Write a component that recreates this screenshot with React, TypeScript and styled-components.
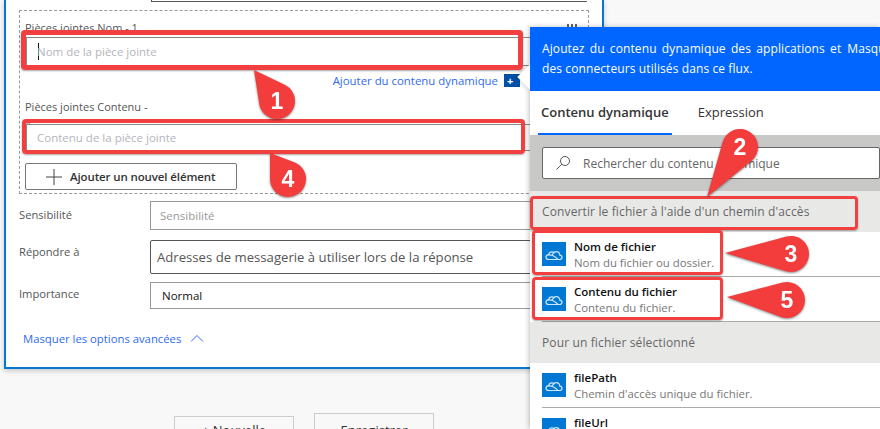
import styled, { createGlobalStyle } from 'styled-components';

const GlobalStyle = createGlobalStyle`
  html, body {
    margin: 0;
    padding: 0;
    background: #f8f8f8;
  }
  * {
    box-sizing: border-box;
  }
`;

const Page = styled.div`
  position: relative;
  width: 880px;
  height: 429px;
  overflow: hidden;
  background: #f8f8f8;
  font-family: 'Open Sans', 'Noto Sans', sans-serif;
  font-size: 11.5px;
  color: #555;
`;

const Card = styled.div`
  margin-left: 4px;
  width: 600px;
  height: 369px;
  background: #fff;
  border: 2px solid #0078d4;
  border-top: none;
  box-shadow: 0 2px 5px rgba(0, 0, 0, 0.2);
`;

const TopField = styled.div`
  margin-left: 145px;
  width: 436px;
  height: 2px;
  border-left: 1px solid #555;
  border-bottom: 1px solid #555;
`;

const Repeater = styled.div`
  margin: 8px 0 0 13px;
  width: 570px;
  height: 184px;
  padding: 9px 0 0 5px;
  border: 1px dashed #999;
`;

const LabelRow = styled.div`
  display: flex;
  justify-content: space-between;
  padding-right: 10px;
`;

const MoreDots = styled.svg`
  margin-top: 4px;
`;

const FieldLabel = styled.div<{ $height: number }>`
  width: 126px;
  height: ${(p) => p.$height}px;
  line-height: 16px;
  color: #555;
  font-size: 11px;
`;

const FieldInput = styled.div<{ $height: number }>`
  display: flex;
  align-items: center;
  width: 520px;
  height: ${(p) => p.$height}px;
  margin-left: 1px;
  padding-left: 10px;
  background: #fff;
  border: 1px solid #888;
  color: #b4b4bc;
`;

const Caret = styled.span`
  width: 1px;
  height: 17px;
  margin: 0 -2px 0 1px;
  background: #111;
`;

const LinkRow = styled.div`
  display: flex;
  justify-content: flex-end;
  align-items: center;
  gap: 6px;
  width: 495px;
  height: 33px;
  padding-bottom: 5px;
`;

const BlueLink = styled.a`
  color: #2f6bf0;
  font-size: 11.4px;
`;

const PlusBadge = styled.span`
  display: flex;
  align-items: center;
  width: 16px;
  height: 13px;
  padding-left: 3px;
  background: #0050a8;
  color: #fff;
  font-size: 11px;
  font-weight: 700;
  line-height: 13px;
`;

const AddButton = styled.button`
  display: flex;
  align-items: center;
  gap: 8px;
  width: 212px;
  height: 27px;
  margin-top: 12px;
  padding: 0 0 0 20px;
  background: #fff;
  border: 1px solid #777;
  border-radius: 2px;
  font-family: inherit;
  font-size: 11.5px;
  font-weight: 600;
  letter-spacing: -0.12px;
  color: #333;
`;

const FormRow = styled.div<{ $height: number; $top: number }>`
  display: grid;
  grid-template-columns: 131px 1fr;
  height: ${(p) => p.$height}px;
  margin: ${(p) => p.$top}px 0 0 13px;
  width: 570px;
`;

const RowLabel = styled.div<{ $drop: number }>`
  padding-top: ${(p) => p.$drop}px;
  line-height: 16px;
  font-size: 11.2px;
  color: #555;
`;

const RowInput = styled.div<{ $dark?: boolean; $color: string; $pad: number; $size: number }>`
  display: flex;
  align-items: center;
  padding-left: ${(p) => p.$pad}px;
  background: #fff;
  border: 1px solid ${(p) => (p.$dark ? '#555' : '#999')};
  border-radius: ${(p) => (p.$dark ? 2 : 0)}px;
  color: ${(p) => p.$color};
  font-size: ${(p) => p.$size}px;
`;

const AdvancedLink = styled.div`
  display: flex;
  align-items: center;
  gap: 9px;
  margin: 21px 0 0 17px;
  height: 16px;
  color: #2f6bf0;
  font-size: 11.3px;
`;

const BottomActions = styled.div`
  display: flex;
  align-items: flex-start;
  gap: 20px;
  margin: 44px 0 0 174px;
`;

const GhostButton = styled.div<{ $drop: number }>`
  width: 120px;
  height: 32px;
  margin-top: ${(p) => p.$drop}px;
  padding-top: ${(p) => 7 - p.$drop}px;
  border: 1px solid #ccc;
  text-align: center;
  font-size: 13px;
  color: #333;
`;

const Panel = styled.div`
  position: absolute;
  left: 530px;
  top: 27px;
  width: 350px;
  height: 402px;
  background: #fff;
  box-shadow: -1px 0 5px rgba(0, 0, 0, 0.25);

  &::before {
    content: '';
    position: absolute;
    left: -9px;
    top: 41px;
    width: 18px;
    height: 18px;
    background: #fff;
    transform: rotate(45deg);
    box-shadow: -2px 2px 4px rgba(0, 0, 0, 0.12);
  }
`;

const PanelHeader = styled.div`
  position: relative;
  height: 64px;
  padding: 12px 0 0 12px;
  background: #0066ff;
  color: #fff;
  font-size: 12px;
  line-height: 20px;
  letter-spacing: 0.1px;
  white-space: nowrap;
  overflow: hidden;
`;

const HeaderLine = styled.div`
  display: flex;
  gap: 6px;
  word-spacing: 2px;
`;

const Tabs = styled.div`
  display: flex;
  height: 44px;
  padding-left: 8px;
  gap: 23px;
  background: #fff;
`;

const Tab = styled.div<{ $active?: boolean }>`
  display: flex;
  align-items: center;
  height: 44px;
  padding: 0 3px;
  border-bottom: 2px solid ${(p) => (p.$active ? '#0066ff' : 'transparent')};
  color: #333;
  font-size: 13px;
  font-weight: ${(p) => (p.$active ? 600 : 400)};
`;

const SearchArea = styled.div`
  height: 56px;
  padding: 12px 0 0 12px;
  background: #c8c9c7;
`;

const SearchBox = styled.div`
  display: flex;
  align-items: center;
  gap: 12px;
  height: 32px;
  padding-left: 12px;
  background: #fff;
  border: 1px solid #666;
  border-radius: 2px;
  color: #666;
  font-size: 12px;
`;

const SectionHeader = styled.div`
  display: flex;
  align-items: center;
  height: 41px;
  padding-left: 12px;
  background: #e8e9e7;
  color: #666;
  font-size: 12px;
  letter-spacing: 0.13px;
`;

const Item = styled.div`
  display: flex;
  gap: 8px;
  height: 45px;
  margin-left: 12px;
  padding-top: 10px;
  border-bottom: 1px solid #aaa;
`;

const ItemIcon = styled.div`
  flex: none;
  width: 24px;
  height: 24px;
  background: #0078d4;
`;

const ItemText = styled.div`
  margin-top: -3px;
`;

const ItemTitle = styled.div`
  color: #111;
  font-size: 11.5px;
  font-weight: 600;
  line-height: 16px;
`;

const ItemDesc = styled.div`
  color: #777;
  font-size: 11.4px;
  line-height: 16px;
`;

const Highlight = styled.div<{ $x: number; $y: number; $w: number; $h: number; $thick: number }>`
  position: absolute;
  left: ${(p) => p.$x}px;
  top: ${(p) => p.$y}px;
  width: ${(p) => p.$w}px;
  height: ${(p) => p.$h}px;
  border: ${(p) => p.$thick}px solid #f23f3f;
  border-radius: 4px;
  box-shadow: 0 1px 2px rgba(0, 0, 0, 0.35);
`;

const CalloutLayer = styled.svg`
  position: absolute;
  left: 0;
  top: 0;
  filter: drop-shadow(0 1px 1px rgba(0, 0, 0, 0.45));
`;

const CalloutNumber = styled.text`
  fill: #fff;
  font-family: 'Liberation Sans', Arial, sans-serif;
  font-size: 23px;
  font-weight: 700;
  text-anchor: middle;
`;

const highlights = [
  { x: 21, y: 30, w: 502, h: 40, thick: 5 },
  { x: 22, y: 119, w: 503, h: 35, thick: 4 },
  { x: 530, y: 196, w: 328, h: 34, thick: 3 },
  { x: 532, y: 230, w: 191, h: 45, thick: 3 },
  { x: 532, y: 277, w: 191, h: 43, thick: 3 },
];

const callouts = [
  { n: 1, tx: 254, ty: 70, cx: 277, cy: 101 },
  { n: 4, tx: 270, ty: 153, cx: 288, cy: 179 },
  { n: 2, tx: 707, ty: 197, cx: 740, cy: 147 },
  { n: 3, tx: 725, ty: 253, cx: 791, cy: 254 },
  { n: 5, tx: 727, ty: 297, cx: 787, cy: 300 },
];

// teardrop: tangent lines from the tip round the circle
function dropPath(tx: number, ty: number, cx: number, cy: number, r: number) {
  const angle = Math.atan2(ty - cy, tx - cx);
  const spread = Math.acos(r / Math.hypot(tx - cx, ty - cy));
  const ax = cx + r * Math.cos(angle + spread);
  const ay = cy + r * Math.sin(angle + spread);
  const bx = cx + r * Math.cos(angle - spread);
  const by = cy + r * Math.sin(angle - spread);
  return `M${tx} ${ty}L${ax} ${ay}A${r} ${r} 0 1 1 ${bx} ${by}Z`;
}

function CloudIcon() {
  return (
    <ItemIcon>
      <svg width="24" height="24" viewBox="0 0 24 24" fill="none" stroke="#cfe6fa" strokeWidth="1.2">
        <path d="M7 17.500h10.500c1.600 0 2.500-1 2.500-2.200 0-1.200-.9-2.100-2.200-2.200-.2-2-1.600-3.400-3.600-3.400-.9 0-1.700.3-2.300.8-.6-.5-1.300-.7-2-.7-1.700 0-3 1.200-3.200 2.900C5 12.900 4 13.900 4 15.200c0 1.300 1.200 2.300 3 2.300z" />
        <path d="M6 13c3-.6 6 .4 10 4.400M12.400 10.500c-1 .6-1.800 1.400-2.200 2.400" />
      </svg>
    </ItemIcon>
  );
}

function SearchIcon() {
  return (
    <svg width="16" height="16" viewBox="0 0 16 16" fill="none" stroke="#555" strokeWidth="1">
      <circle cx="10" cy="6" r="4.500" />
      <path d="M6.800 9.200 1.500 14.500" />
    </svg>
  );
}

function FileItem({ title, desc }: { title: string; desc: string }) {
  return (
    <Item>
      <CloudIcon />
      <ItemText>
        <ItemTitle>{title}</ItemTitle>
        <ItemDesc>{desc}</ItemDesc>
      </ItemText>
    </Item>
  );
}

function App() {
  return (
    <Page>
      <GlobalStyle />
      <Card>
        <TopField />
        <Repeater>
          <LabelRow>
            <FieldLabel $height={17}>Pièces jointes Nom - 1</FieldLabel>
            <MoreDots width="11" height="3" viewBox="0 0 11 3" fill="#666">
              <rect x="0" y="0" width="2" height="3" />
              <rect x="4" y="0" width="2" height="3" />
              <rect x="8" y="0" width="2" height="3" />
            </MoreDots>
          </LabelRow>
          <FieldInput $height={29}>
            <Caret />
            Nom de la pièce jointe
          </FieldInput>
          <LinkRow>
            <BlueLink>Ajouter du contenu dynamique</BlueLink>
            <PlusBadge>+</PlusBadge>
          </LinkRow>
          <FieldLabel $height={25}>Pièces jointes Contenu - *</FieldLabel>
          <FieldInput $height={27}>Contenu de la pièce jointe</FieldInput>
          <AddButton>
            <svg width="16" height="16" viewBox="0 0 16 16" stroke="#444" strokeWidth="1">
              <path d="M0 8h16M8 0v16" />
            </svg>
            Ajouter un nouvel élément
          </AddButton>
        </Repeater>
        <FormRow $height={29} $top={7}>
          <RowLabel $drop={6}>Sensibilité</RowLabel>
          <RowInput $color="#999" $pad={9} $size={11.5}>Sensibilité</RowInput>
        </FormRow>
        <FormRow $height={34} $top={10}>
          <RowLabel $drop={4}>Répondre à</RowLabel>
          <RowInput $dark $color="#555" $pad={6} $size={13.15}>
            Adresses de messagerie à utiliser lors de la réponse
          </RowInput>
        </FormRow>
        <FormRow $height={27} $top={8}>
          <RowLabel $drop={4}>Importance</RowLabel>
          <RowInput $color="#111" $pad={11} $size={11.5}>Normal</RowInput>
        </FormRow>
        <AdvancedLink>
          Masquer les options avancées
          <svg width="14" height="8" viewBox="0 0 14 8" fill="none" stroke="#2f6bf0">
            <path d="M1 7.500 7 1.500l6 6" />
          </svg>
        </AdvancedLink>
      </Card>
      <BottomActions>
        <GhostButton $drop={3}>+ Nouvelle</GhostButton>
        <GhostButton $drop={0}>Enregistrer</GhostButton>
      </BottomActions>

      <Panel>
        <PanelHeader>
          <HeaderLine>
            <span>Ajoutez du contenu dynamique des applications et</span>
            <span>Masquer</span>
          </HeaderLine>
          <div>des connecteurs utilisés dans ce flux.</div>
        </PanelHeader>
        <Tabs>
          <Tab $active>Contenu dynamique</Tab>
          <Tab>Expression</Tab>
        </Tabs>
        <SearchArea>
          <SearchBox>
            <SearchIcon />
            Rechercher du contenu dynamique
          </SearchBox>
        </SearchArea>
        <SectionHeader>Convertir le fichier à l'aide d'un chemin d'accès</SectionHeader>
        <FileItem title="Nom de fichier" desc="Nom du fichier ou dossier." />
        <FileItem title="Contenu du fichier" desc="Contenu du fichier." />
        <SectionHeader>Pour un fichier sélectionné</SectionHeader>
        <FileItem title="filePath" desc="Chemin d'accès unique du fichier." />
        <FileItem title="fileUrl" desc="URL du fichier." />
      </Panel>

      {highlights.map((h) => (
        <Highlight key={`${h.x}-${h.y}`} $x={h.x} $y={h.y} $w={h.w} $h={h.h} $thick={h.thick} />
      ))}
      <CalloutLayer width="880" height="429" viewBox="0 0 880 429">
        {callouts.map((c) => (
          <g key={c.n}>
            <path d={dropPath(c.tx, c.ty, c.cx, c.cy, 18)} fill="#f33d3d" />
            <CalloutNumber x={c.cx} y={c.cy + 8}>{c.n}</CalloutNumber>
          </g>
        ))}
      </CalloutLayer>
    </Page>
  );
}

export default App;
